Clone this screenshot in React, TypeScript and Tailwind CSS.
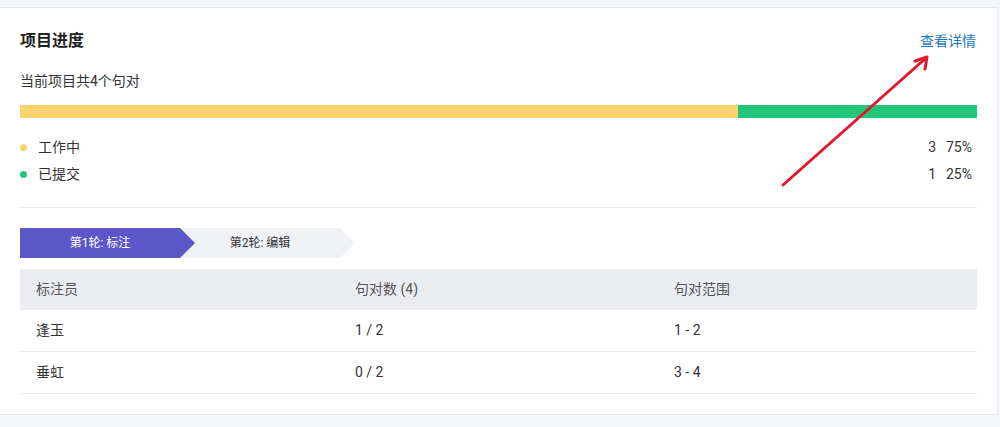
import React from "react";

const font = { fontFamily: 'Roboto, "Noto Sans CJK SC", sans-serif' };

const legend = [
  { label: "工作中", dot: "bg-[#fdd36e]", count: 3, pct: "75%" },
  { label: "已提交", dot: "bg-[#22c57a]", count: 1, pct: "25%" },
];

const rows = [
  { name: "逢玉", count: "1 / 2", range: "1 - 2" },
  { name: "垂虹", count: "0 / 2", range: "3 - 4" },
];

export default function App() {
  return (
    <div className="relative min-h-[427px] w-[1000px] bg-[#f5f6fa] pt-[7px]" style={font}>
      {/* Card */}
      <div className="w-[998px] border border-l-0 border-[#e6e7ec] bg-white px-5 pb-[20px] pt-[21px]">
        <div className="flex h-6 items-center justify-between">
          <h2 className="text-[16px] font-bold text-[#222]">项目进度</h2>
          <a className="pr-px text-[14px] text-[#1b78c0]">查看详情</a>
        </div>
        <p className="mt-[18px] h-5 text-[14px] leading-5 text-[#333]">当前项目共4个句对</p>

        {/* Progress bar */}
        <div className="mt-[14px] flex h-[13px] w-full">
          <div className="h-full w-[75%] bg-[#fdd36e]" />
          <div className="h-full w-[25%] bg-[#22c57a]" />
        </div>

        {/* Legend */}
        <div className="mt-[19px] flex flex-col gap-[7px]">
          {legend.map((l) => (
            <div key={l.label} className="flex h-5 items-center text-[14px] text-[#333]">
              <span className={`h-[7px] w-[7px] rounded-full ${l.dot}`} />
              <span className="ml-[11px] flex-1">{l.label}</span>
              <span>{l.count}</span>
              <span className="ml-[10px] pr-[5px]">{l.pct}</span>
            </div>
          ))}
        </div>

        <div className="mt-[23px] h-px bg-[#e8e9ed]" />

        {/* Steps */}
        <div className="mt-[20px] flex h-[30px]">
          <div className="relative z-10 flex h-full w-[175px] items-center justify-center bg-[#5b57c8] pr-[15px] text-[12px] text-white [clip-path:polygon(0_0,calc(100%-15px)_0,100%_50%,calc(100%-15px)_100%,0_100%)]">
            第1轮: 标注
          </div>
          <div className="-ml-[15px] flex h-full w-[175px] items-center justify-center bg-[#f0f1f5] pr-[15px] text-[12px] text-[#333] [clip-path:polygon(0_0,calc(100%-15px)_0,100%_50%,calc(100%-15px)_100%,0_100%)]">
            第2轮: 编辑
          </div>
        </div>

        {/* Table */}
        <div className="mt-[11px] text-[14px]">
          <div className="grid h-[41px] grid-cols-3 items-center bg-[#ebecf0] text-[#555]">
            <div className="pl-4">标注员</div>
            <div className="pl-4">句对数 (4)</div>
            <div className="pl-4">句对范围</div>
          </div>
          {rows.map((r) => (
            <div key={r.name} className="grid h-[42px] grid-cols-3 items-center border-b border-[#e8e9ed] text-[#333]">
              <div className="pl-4">{r.name}</div>
              <div className="pl-4">{r.count}</div>
              <div className="pl-4">{r.range}</div>
            </div>
          ))}
        </div>
      </div>

      {/* Annotation arrow */}
      <svg className="pointer-events-none absolute left-0 top-0" width="1000" height="427" viewBox="0 0 1000 427">
        <g stroke="#e3182d" strokeWidth="3" strokeLinecap="round" strokeLinejoin="round" fill="none">
          <line x1="783" y1="185" x2="926" y2="58" />
          <polyline points="915,61 927,57 925,69" />
        </g>
      </svg>
    </div>
  );
}
